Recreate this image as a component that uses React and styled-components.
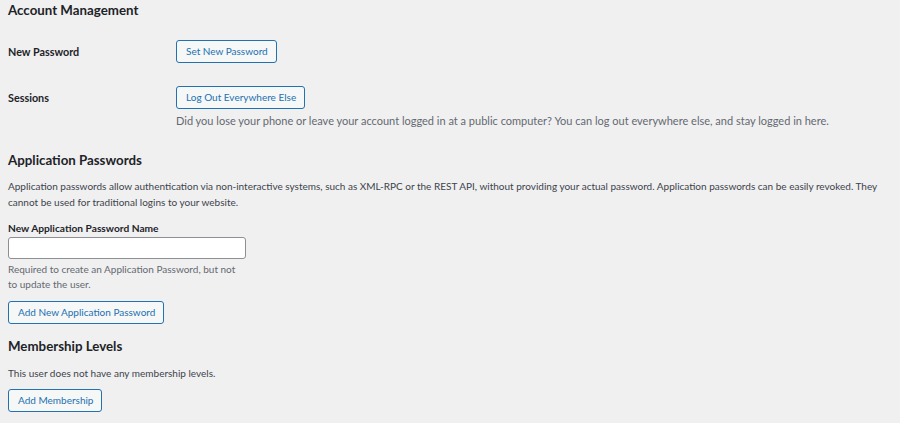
import React from 'react';
import styled, { createGlobalStyle } from 'styled-components';

const GlobalStyle = createGlobalStyle`
  html, body {
    margin: 0;
    padding: 0;
    background: #f0f0f1;
  }
  body {
    font-family: Lato, "Noto Sans", sans-serif;
    color: #1d2327;
    font-size: 10px;
  }
`;

export default function App() {
  return (
    <>
      <GlobalStyle />
      <Page>
        <Heading>Account Management</Heading>
        <FormTable>
          <Row>
            <Label>New Password</Label>
            <Cell>
              <Button type="button">Set New Password</Button>
            </Cell>
          </Row>
          <Row $gap={23}>
            <Label>Sessions</Label>
            <Cell>
              <Button type="button">Log Out Everywhere Else</Button>
              <Description>
                Did you lose your phone or leave your account logged in at a public computer? You can log
                out everywhere else, and stay logged in here.
              </Description>
            </Cell>
          </Row>
        </FormTable>

        <Heading $top={21}>Application Passwords</Heading>
        <Paragraph $top={8}>
          Application passwords allow authentication via non-interactive systems, such as XML-RPC or the
          REST API, without providing your actual password. Application passwords can be easily revoked.
          They cannot be used for traditional logins to your website.
        </Paragraph>
        <FieldLabel htmlFor="app-pass-name">New Application Password Name</FieldLabel>
        <TextInput id="app-pass-name" type="text" />
        <Help>Required to create an Application Password, but not to update the user.</Help>
        <Button type="button" $top={10}>Add New Application Password</Button>

        <Heading $top={12}>Membership Levels</Heading>
        <Paragraph $top={9}>This user does not have any membership levels.</Paragraph>
        <Button type="button" $top={8}>Add Membership</Button>
      </Page>
    </>
  );
}

/******************** styled components ************************/

const Page = styled.div`
  padding: 0 8px;
  display: flex;
  flex-direction: column;
  align-items: flex-start;
`;

const Heading = styled.h2`
  margin: ${(p) => p.$top || 0}px 0 0;
  font-size: 13.3px;
  line-height: 20px;
  font-weight: 700;
  color: #1d2327;
`;

const FormTable = styled.div`
  margin-top: 20px;
  width: 100%;
`;

const Row = styled.div`
  display: grid;
  grid-template-columns: 168px 1fr;
  align-items: start;
  margin-top: ${(p) => p.$gap || 0}px;
`;

const Label = styled.div`
  font-weight: 700;
  line-height: 23px;
  font-size: 10.8px;
`;

const Cell = styled.div`
  display: flex;
  flex-direction: column;
  align-items: flex-start;
`;

const Button = styled.button`
  margin-top: ${(p) => p.$top || 0}px;
  height: 23px;
  padding: 0 8px 0 9px;
  border: 1px solid #2271b1;
  border-radius: 3px;
  background: #f6f7f7;
  color: #2271b1;
  font-family: inherit;
  font-size: 10px;
  line-height: 21px;
  cursor: pointer;
`;

const Description = styled.p`
  margin: 4px 0 0;
  font-size: 11px;
  line-height: 16px;
  color: #646970;
`;

const Paragraph = styled.p`
  margin: ${(p) => p.$top || 0}px 0 0;
  font-size: 10px;
  line-height: 16px;
  color: #3c434a;
`;

const FieldLabel = styled.label`
  margin-top: 10px;
  font-size: 10.2px;
  line-height: 16px;
  font-weight: 700;
`;

const TextInput = styled.input`
  box-sizing: border-box;
  margin-top: 1px;
  width: 238px;
  height: 22px;
  border: 1px solid #8c8f94;
  border-radius: 3px;
  background: #fff;
  padding: 0 6px;
  font-family: inherit;
`;

const Help = styled.p`
  margin: 3px 0 0;
  max-width: 238px;
  font-size: 10px;
  line-height: 14.5px;
  color: #646970;
`;
